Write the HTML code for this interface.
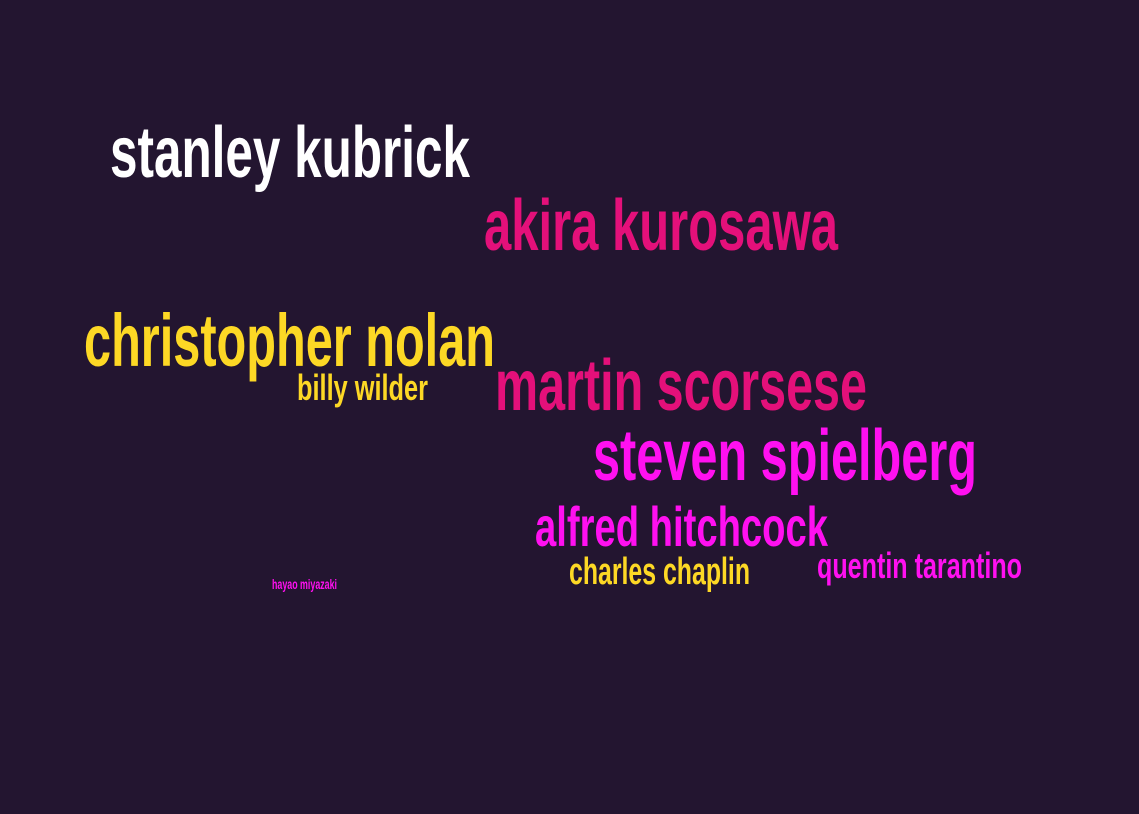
<!DOCTYPE html>
<html><head><meta charset="utf-8"><style>
html,body{margin:0;padding:0;background:#231530;width:1139px;height:814px;overflow:hidden}
svg text{font-family:"Liberation Sans Narrow","Liberation Sans",sans-serif;font-weight:bold}
</style></head><body>
<svg width="1139" height="814" xmlns="http://www.w3.org/2000/svg">
<rect width="1139" height="814" fill="#231530"/>
<text x="110" y="177" font-size="72" fill="#ffffff" textLength="360" lengthAdjust="spacingAndGlyphs">stanley kubrick</text>
<text x="484" y="250" font-size="72" fill="#e4107a" textLength="354" lengthAdjust="spacingAndGlyphs">akira kurosawa</text>
<text x="84" y="366" font-size="74" fill="#fdd825" textLength="411" lengthAdjust="spacingAndGlyphs">christopher nolan</text>
<text x="297" y="400" font-size="36" fill="#fdd825" textLength="131" lengthAdjust="spacingAndGlyphs">billy wilder</text>
<text x="495" y="410" font-size="72" fill="#e4107a" textLength="372" lengthAdjust="spacingAndGlyphs">martin scorsese</text>
<text x="593" y="480" font-size="72" fill="#ff10f0" textLength="384" lengthAdjust="spacingAndGlyphs">steven spielberg</text>
<text x="535" y="546" font-size="56" fill="#ff10f0" textLength="293" lengthAdjust="spacingAndGlyphs">alfred hitchcock</text>
<text x="569" y="584" font-size="38" fill="#fdd825" textLength="181" lengthAdjust="spacingAndGlyphs">charles chaplin</text>
<text x="817" y="578" font-size="36" fill="#ff10f0" textLength="205" lengthAdjust="spacingAndGlyphs">quentin tarantino</text>
<text x="272" y="589" font-size="14" fill="#ff10f0" textLength="65" lengthAdjust="spacingAndGlyphs">hayao miyazaki</text>
</svg>
</body></html>
